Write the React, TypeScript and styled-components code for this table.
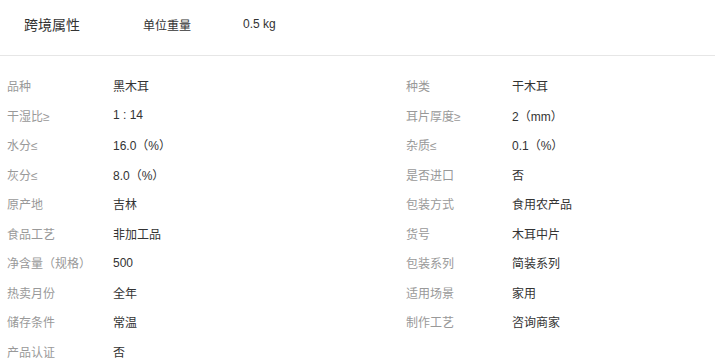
import styled, { createGlobalStyle } from "styled-components";

const attributes: [string, string][] = [
  ["品种", "黑木耳"],
  ["种类", "干木耳"],
  ["干湿比≥", "1 : 14"],
  ["耳片厚度≥", "2（mm）"],
  ["水分≤", "16.0（%）"],
  ["杂质≤", "0.1（%）"],
  ["灰分≤", "8.0（%）"],
  ["是否进口", "否"],
  ["原产地", "吉林"],
  ["包装方式", "食用农产品"],
  ["食品工艺", "非加工品"],
  ["货号", "木耳中片"],
  ["净含量（规格）", "500"],
  ["包装系列", "简装系列"],
  ["热卖月份", "全年"],
  ["适用场景", "家用"],
  ["储存条件", "常温"],
  ["制作工艺", "咨询商家"],
  ["产品认证", "否"],
];

export default function App() {
  return (
    <>
      <GlobalStyle />
      <Page>
        <Header>
          <HeaderTitle>跨境属性</HeaderTitle>
          <HeaderLabel>单位重量</HeaderLabel>
          <HeaderValue>0.5 kg</HeaderValue>
        </Header>
        <Grid>
          {attributes.map(([label, value]) => (
            <Item key={label}>
              <Label>{label}</Label>
              <Value>{value}</Value>
            </Item>
          ))}
        </Grid>
      </Page>
    </>
  );
}

const GlobalStyle = createGlobalStyle`
  html, body {
    margin: 0;
    padding: 0;
    background: #ffffff;
  }
  body {
    font-family: "Liberation Sans", "Noto Sans CJK SC", sans-serif;
    color: #333333;
  }
`;

const Page = styled.div`
  width: 715px;
  height: 364px;
  overflow: hidden;
`;

const Header = styled.div`
  display: flex;
  align-items: center;
  height: 48px;
  padding: 0 0 7px 24px;
  border-bottom: 1px solid #e6e6e6;
`;

const HeaderTitle = styled.div`
  width: 119px;
  font-size: 14px;
  color: #333333;
`;

const HeaderLabel = styled.div`
  width: 100px;
  font-size: 12px;
  color: #333333;
`;

const HeaderValue = styled.div`
  font-size: 12px;
  color: #333333;
`;

const Grid = styled.div`
  display: grid;
  grid-template-columns: 399px 1fr;
  grid-auto-rows: 29.5px;
  padding: 15px 0 0 7px;
`;

const Item = styled.div`
  display: flex;
  align-items: center;
  font-size: 12px;
`;

const Label = styled.div`
  width: 106px;
  flex-shrink: 0;
  color: #999999;
  white-space: nowrap;
`;

const Value = styled.div`
  color: #333333;
  white-space: nowrap;
`;
